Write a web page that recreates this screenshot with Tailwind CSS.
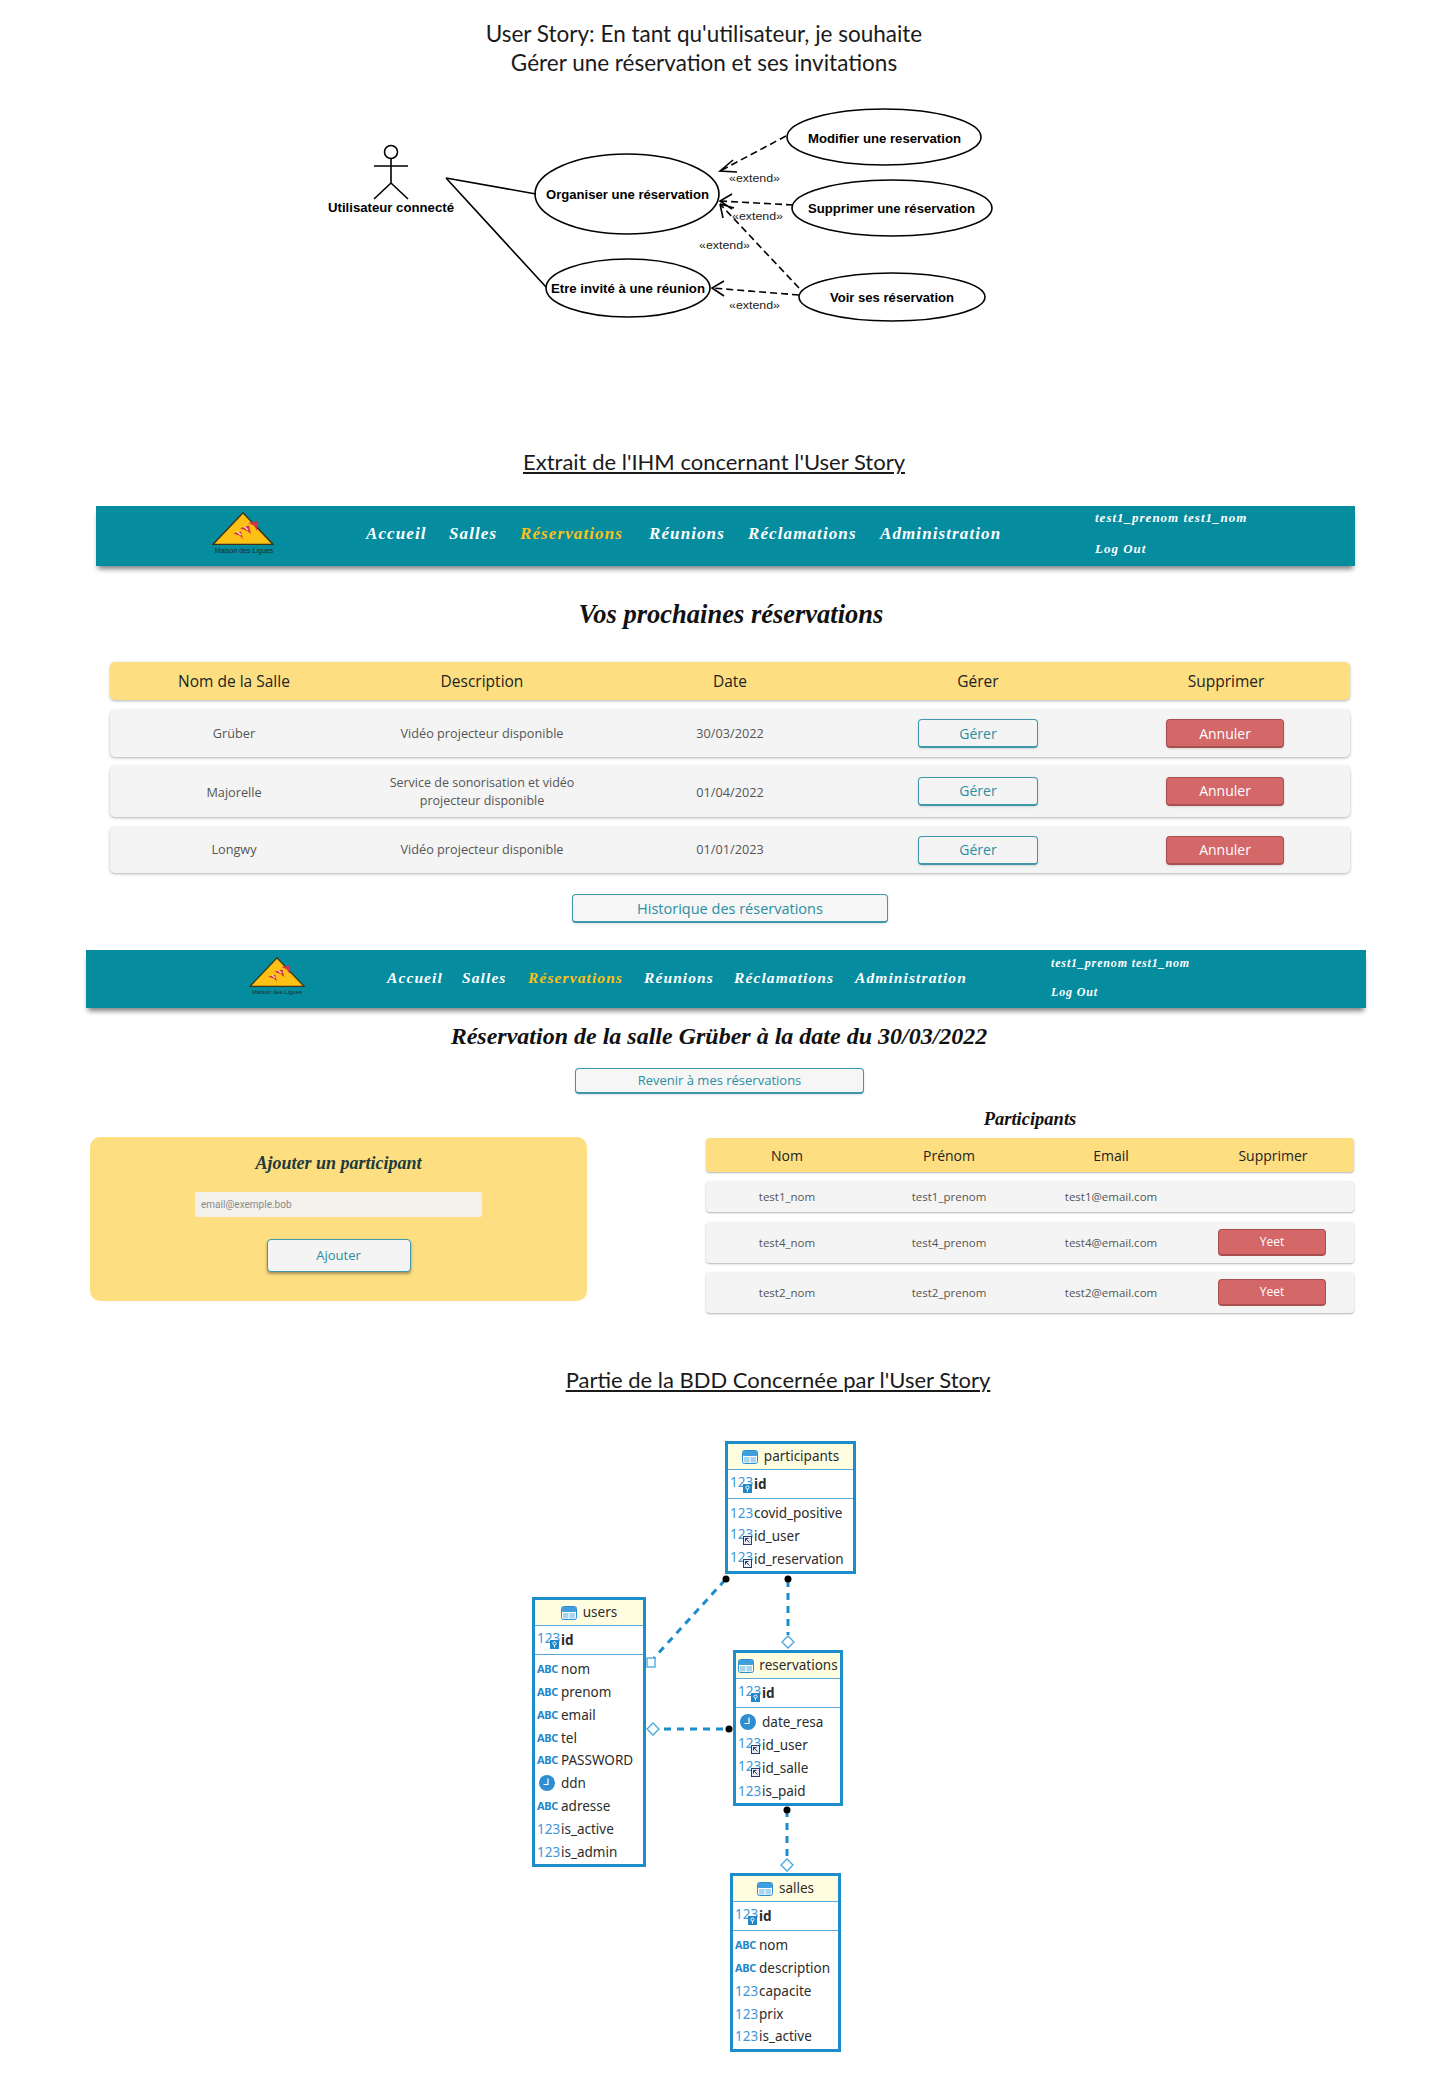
<!DOCTYPE html>
<html lang="fr">
<head>
    <meta charset="UTF-8">
    <title>User Story - Gérer une réservation</title>
    <script src="https://cdn.jsdelivr.net/npm/@tailwindcss/browser@4"></script>
</head>
<body class="bg-white">
<svg class="hidden">
    <symbol id="tbl" viewBox="0 0 16 14">
        <rect x="0.5" y="0.5" width="15" height="13" rx="2" fill="#fff" stroke="#2a8fd0"/>
        <rect x="1" y="1" width="14" height="5" rx="1" fill="#3f9fdc"/>
        <rect x="2" y="7" width="5.5" height="5.5" fill="#a9d4f0"/>
        <rect x="8.5" y="7" width="5.5" height="5.5" fill="#a9d4f0"/>
    </symbol>
    <symbol id="clock" viewBox="0 0 16 16">
        <circle cx="8" cy="8" r="8" fill="#2f8ed0"/>
        <path d="M9 3.5V9.5H4.5" fill="none" stroke="#fff" stroke-width="1.2"/>
    </symbol>
    <symbol id="key" viewBox="0 0 9 9">
        <rect width="9" height="9" fill="#1f86c9"/>
        <circle cx="4.5" cy="3.5" r="1.6" fill="none" stroke="#fff"/>
        <path d="M4.5 5V7.5" stroke="#fff"/>
    </symbol>
    <symbol id="fk" viewBox="0 0 9 9">
        <rect width="9" height="9" fill="#2c3a66"/>
        <rect x="1" y="1" width="7" height="7" fill="#e8eef8"/>
        <path d="M2.5 2.5L6.5 6.5M2.5 2.5H5.5M2.5 2.5V5.5" stroke="#2c3a66" fill="none"/>
    </symbol>
    <symbol id="logo" viewBox="0 0 62 40" preserveAspectRatio="none">
        <path d="M31 1L61 38H1Z" fill="#fdc116" stroke="#3a3418" stroke-width="1.5"/>
        <path d="M21 25l8-2 2 9-3-4zM28 19l9-3 2 10-4-4zM36 13l9-2 0 11-3-6z" fill="#d8304a"/>
        <path d="M25 23l4 4M32 17l4 4" stroke="#f4e4c0" stroke-width="1.5"/>
    </symbol>
</svg>

<div class="relative w-[1450px] h-[2100px] overflow-hidden">

    <!-- User story -->
    <div class="pt-[19px] h-[78px] text-center text-[22.5px] leading-[29px] text-[#1a1a1a] font-['Lato',sans-serif] pr-[42px]">
        <p>User Story: En tant qu'utilisateur, je souhaite</p>
        <p>Gérer une réservation et ses invitations</p>
    </div>

    <svg class="block w-[1450px] h-[369px]" viewBox="0 78 1450 369" font-family="'Liberation Sans',sans-serif">
        <g fill="none" stroke="#000" stroke-width="1.6">
            <circle cx="391" cy="152" r="6.5"/>
            <path d="M391 159V183M374 166H408M391 183L374 199M391 183L408 199"/>
            <path d="M446 178L536 194M446 178L546 287"/>
            <ellipse cx="627" cy="194" rx="92" ry="40"/>
            <ellipse cx="628" cy="288" rx="82" ry="29"/>
            <ellipse cx="884" cy="137" rx="97" ry="28"/>
            <ellipse cx="892" cy="208" rx="100" ry="28"/>
            <ellipse cx="892" cy="297" rx="93" ry="24"/>
            <g stroke-dasharray="7 4">
                <path d="M786 136L720 171"/>
                <path d="M793 205L720 201"/>
                <path d="M799 288L720 204"/>
                <path d="M799 295L712 288"/>
            </g>
            <path d="M733 160L720 171L737 172M732 194L720 201L732 209M720 204L723 218M720 204L734 208M724 281L712 288L724 296"/>
        </g>
        <g font-size="12" font-weight="700" fill="#000">
            <text x="328" y="212" textLength="126" lengthAdjust="spacingAndGlyphs">Utilisateur connecté</text>
            <text x="546" y="199" textLength="163" lengthAdjust="spacingAndGlyphs">Organiser une réservation</text>
            <text x="551" y="293" textLength="154" lengthAdjust="spacingAndGlyphs">Etre invité à une réunion</text>
            <text x="808" y="143" textLength="153" lengthAdjust="spacingAndGlyphs">Modifier une reservation</text>
            <text x="808" y="213" textLength="167" lengthAdjust="spacingAndGlyphs">Supprimer une réservation</text>
            <text x="830" y="302" textLength="124" lengthAdjust="spacingAndGlyphs">Voir ses réservation</text>
        </g>
        <g font-size="11" fill="#222">
            <text x="729" y="182" textLength="51" lengthAdjust="spacingAndGlyphs">«extend»</text>
            <text x="732" y="220" textLength="51" lengthAdjust="spacingAndGlyphs">«extend»</text>
            <text x="699" y="249" textLength="51" lengthAdjust="spacingAndGlyphs">«extend»</text>
            <text x="729" y="309" textLength="51" lengthAdjust="spacingAndGlyphs">«extend»</text>
        </g>
    </svg>

    <h2 class="h-[30px] leading-[30px] text-center text-[22px] underline pr-[22px] text-[#1a1a1a] font-['Lato',sans-serif]">Extrait de l'IHM concernant l'User Story</h2>

    <!-- Nav reservations -->
    <nav class="relative flex items-center mt-[29px] ml-[96px] w-[1259px] h-[60px] bg-[#068c9f] shadow-[0_5px_5px_-2px_rgba(0,0,0,0.5)] font-['Liberation_Serif',serif] italic font-bold text-white">
        <div class="absolute left-[116px] top-[6px] w-[64px]">
            <svg class="block w-[62px] h-[34px]"><use href="#logo"/></svg>
            <p class="text-[7px] leading-[9px] text-center not-italic font-normal text-[#1c2a2a] font-['Liberation_Sans',sans-serif]">Maison des Ligues</p>
        </div>
        <div class="flex items-center ml-[270px] -mt-[4px] text-[17px] tracking-[1.1px] whitespace-nowrap">
            <a class="w-[83px]">Accueil</a>
            <a class="w-[71px]">Salles</a>
            <a class="w-[129px] text-[#fdc116]">Réservations</a>
            <a class="w-[99px]">Réunions</a>
            <a class="w-[132px]">Réclamations</a>
            <a>Administration</a>
        </div>
        <div class="absolute left-[999px] top-[4px] text-[13px] leading-[16px] tracking-[1px]">
            <p>test1_prenom test1_nom</p>
            <p class="mt-[15px]">Log Out</p>
        </div>
    </nav>

    <h1 class="mt-[30px] h-[36px] leading-[36px] text-center text-[26.5px] pl-[12px] font-bold italic text-[#111] font-['Liberation_Serif',serif]">Vos prochaines réservations</h1>

    <!-- Table reservations -->
    <div class="mt-[30px] ml-[110px] w-[1240px] font-['Open_Sans',sans-serif]">
        <div class="grid grid-cols-5 items-center text-center h-[38px] pt-[2px] bg-[#fddf82] rounded-[5px] shadow-[0_1px_3px_rgba(0,0,0,0.3)] text-[15.5px] text-[#222]">
            <div>Nom de la Salle</div><div>Description</div><div>Date</div><div>Gérer</div><div>Supprimer</div>
        </div>
        <div class="grid grid-cols-5 items-center text-center h-[47px] mt-[10px] bg-[#f4f4f4] rounded-[5px] shadow-[0_1px_3px_rgba(0,0,0,0.3)] text-[12.7px] text-[#555]">
            <div>Grüber</div><div>Vidéo projecteur disponible</div><div>30/03/2022</div>
            <div class="flex justify-center"><button class="w-[120px] h-[29px] rounded-[4px] border border-b-[2px] border-[#3e97aa] bg-[#f4f4f4] text-[14px] text-[#2a8ea3] shadow-sm">Gérer</button></div>
            <div class="flex justify-center pr-[2px]"><button class="w-[118px] h-[29px] rounded-[4px] border border-b-[2px] border-[#a94f4f] bg-[#d46767] text-[14px] text-white shadow-sm">Annuler</button></div>
        </div>
        <div class="grid grid-cols-5 items-center text-center h-[51px] mt-[9px] bg-[#f4f4f4] rounded-[5px] shadow-[0_1px_3px_rgba(0,0,0,0.3)] text-[12.7px] leading-[18px] text-[#555]">
            <div>Majorelle</div><div class="text-[12.5px] whitespace-nowrap">Service de sonorisation et vidéo<br>projecteur disponible</div><div>01/04/2022</div>
            <div class="flex justify-center"><button class="w-[120px] h-[29px] rounded-[4px] border border-b-[2px] border-[#3e97aa] bg-[#f4f4f4] text-[14px] text-[#2a8ea3] shadow-sm">Gérer</button></div>
            <div class="flex justify-center pr-[2px]"><button class="w-[118px] h-[29px] rounded-[4px] border border-b-[2px] border-[#a94f4f] bg-[#d46767] text-[14px] text-white shadow-sm">Annuler</button></div>
        </div>
        <div class="grid grid-cols-5 items-center text-center h-[46px] mt-[10px] bg-[#f4f4f4] rounded-[5px] shadow-[0_1px_3px_rgba(0,0,0,0.3)] text-[12.7px] text-[#555]">
            <div>Longwy</div><div>Vidéo projecteur disponible</div><div>01/01/2023</div>
            <div class="flex justify-center"><button class="w-[120px] h-[29px] rounded-[4px] border border-b-[2px] border-[#3e97aa] bg-[#f4f4f4] text-[14px] text-[#2a8ea3] shadow-sm">Gérer</button></div>
            <div class="flex justify-center pr-[2px]"><button class="w-[118px] h-[29px] rounded-[4px] border border-b-[2px] border-[#a94f4f] bg-[#d46767] text-[14px] text-white shadow-sm">Annuler</button></div>
        </div>
    </div>
    <button class="block mt-[21px] ml-[572px] w-[316px] h-[29px] pt-[1px] rounded-[4px] border border-b-[2px] border-[#3e97aa] bg-[#f6f6f6] text-[14.5px] text-[#2a8ea3] shadow-sm font-['Open_Sans',sans-serif]">Historique des réservations</button>

    <!-- Nav participants -->
    <nav class="relative flex items-center mt-[27px] ml-[86px] w-[1280px] h-[58px] bg-[#068c9f] shadow-[0_5px_5px_-2px_rgba(0,0,0,0.5)] font-['Liberation_Serif',serif] italic font-bold text-white">
        <div class="absolute left-[163px] top-[7px] w-[56px]">
            <svg class="block w-[56px] h-[31px]"><use href="#logo"/></svg>
            <p class="text-[6px] leading-[8px] text-center not-italic font-normal text-[#1c2a2a] font-['Liberation_Sans',sans-serif]">Maison des Ligues</p>
        </div>
        <div class="flex items-center ml-[301px] -mt-[2px] text-[15.5px] tracking-[1.1px] whitespace-nowrap">
            <a class="w-[75px]">Accueil</a>
            <a class="w-[66px]">Salles</a>
            <a class="w-[116px] text-[#fdc116]">Réservations</a>
            <a class="w-[90px]">Réunions</a>
            <a class="w-[121px]">Réclamations</a>
            <a>Administration</a>
        </div>
        <div class="absolute left-[965px] top-[5px] text-[12px] leading-[16px] tracking-[0.85px]">
            <p>test1_prenom test1_nom</p>
            <p class="mt-[13px]">Log Out</p>
        </div>
    </nav>

    <h1 class="mt-[10px] h-[36px] leading-[36px] text-center text-[24px] pr-[12px] font-bold italic text-[#111] font-['Liberation_Serif',serif]">Réservation de la salle Grüber à la date du 30/03/2022</h1>
    <button class="block mt-[14px] ml-[575px] w-[289px] h-[26px] pt-[1px] rounded-[4px] border border-b-[2px] border-[#3e97aa] bg-[#f6f6f6] text-[13px] text-[#2a8ea3] shadow-sm font-['Open_Sans',sans-serif]">Revenir à mes réservations</button>

    <div class="flex items-start gap-[119px] pl-[90px] h-[219px]">
        <!-- Ajouter -->
        <div class="flex flex-col items-center mt-[43px] w-[497px] h-[164px] bg-[#fddf82] rounded-[10px]">
            <h3 class="mt-[14px] h-[24px] leading-[24px] text-[18px] font-bold italic text-[#1d3a3c] font-['Liberation_Serif',serif]">Ajouter un participant</h3>
            <div class="mt-[17px] w-[287px] h-[25px] pl-[6px] leading-[25px] bg-[#f4f1ec] rounded-[2px] text-[10px] text-[#8a8a8a] font-['Roboto',sans-serif]">email@exemple.bob</div>
            <button class="mt-[22px] w-[144px] h-[33px] pt-[1px] rounded-[4px] border border-[#3e97aa] bg-[#f4f4f4] text-[13px] text-[#2a8ea3] shadow-[0_2px_3px_rgba(0,0,0,0.35)] font-['Open_Sans',sans-serif]">Ajouter</button>
        </div>
        <!-- Participants -->
        <div class="w-[648px] font-['Open_Sans',sans-serif]">
            <h3 class="mt-[13px] h-[24px] leading-[24px] text-center text-[18.5px] font-bold italic text-[#111] font-['Liberation_Serif',serif]">Participants</h3>
            <div class="grid grid-cols-4 items-center text-center mt-[7px] h-[34px] bg-[#fddf82] rounded-[4px] shadow-[0_1px_2px_rgba(0,0,0,0.3)] text-[14px] text-[#222]">
                <div>Nom</div><div>Prénom</div><div>Email</div><div>Supprimer</div>
            </div>
            <div class="grid grid-cols-4 items-center text-center mt-[9px] h-[31px] bg-[#f4f4f4] rounded-[4px] shadow-[0_1px_2px_rgba(0,0,0,0.3)] text-[11.5px] text-[#555]">
                <div>test1_nom</div><div>test1_prenom</div><div>test1@email.com</div><div></div>
            </div>
            <div class="grid grid-cols-4 items-center text-center mt-[10px] h-[41px] bg-[#f4f4f4] rounded-[4px] shadow-[0_1px_2px_rgba(0,0,0,0.3)] text-[11.5px] text-[#555]">
                <div>test4_nom</div><div>test4_prenom</div><div>test4@email.com</div>
                <div class="flex justify-center pr-[2px]"><button class="w-[108px] h-[27px] rounded-[4px] border border-b-[2px] border-[#a94f4f] bg-[#d46767] text-[12px] text-white">Yeet</button></div>
            </div>
            <div class="grid grid-cols-4 items-center text-center mt-[9px] h-[41px] bg-[#f4f4f4] rounded-[4px] shadow-[0_1px_2px_rgba(0,0,0,0.3)] text-[11.5px] text-[#555]">
                <div>test2_nom</div><div>test2_prenom</div><div>test2@email.com</div>
                <div class="flex justify-center pr-[2px]"><button class="w-[108px] h-[27px] rounded-[4px] border border-b-[2px] border-[#a94f4f] bg-[#d46767] text-[12px] text-white">Yeet</button></div>
            </div>
        </div>
    </div>

    <h2 class="mt-[52px] h-[30px] leading-[30px] text-center text-[22px] underline pl-[106px] text-[#1a1a1a] font-['Lato',sans-serif]">Partie de la BDD Concernée par l'User Story</h2>

    <!-- Schema BDD -->
    <div class="relative h-[705px] font-['Noto_Sans',sans-serif] text-[13.5px] text-[#2b2b2b]">
        <svg class="absolute left-0 top-0 w-[1450px] h-[705px]" viewBox="0 1395 1450 705">
            <g fill="none" stroke="#1c8dcb" stroke-width="3" stroke-dasharray="7 6">
                <path d="M725 1580L654 1658"/>
                <path d="M788 1580V1635"/>
                <path d="M664 1729H730"/>
                <path d="M787 1810V1858"/>
            </g>
            <g fill="#000">
                <circle cx="726" cy="1579" r="3.5"/>
                <circle cx="788" cy="1579" r="3.5"/>
                <circle cx="729" cy="1729" r="3.5"/>
                <circle cx="787" cy="1810" r="3.5"/>
            </g>
            <g fill="#fff" stroke="#45a5de" stroke-width="1.3">
                <rect x="647" y="1658" width="8" height="9"/>
                <path d="M788 1636l6 6-6 6-6-6z"/>
                <path d="M653 1723l6 6-6 6-6-6z"/>
                <path d="M787 1859l6 6-6 6-6-6z"/>
            </g>
        </svg>

        <!-- participants -->
        <div class="absolute left-[725px] top-[46px] w-[131px] h-[133px] border-[3px] border-[#1c8dcb] bg-white">
            <div class="flex items-center justify-center gap-[6px] h-[26px] bg-[#fffde0] border-b border-[#5aa9da]"><svg class="w-[16px] h-[14px]"><use href="#tbl"/></svg>participants</div>
            <div class="flex items-center h-[29px] pl-[2px] border-b border-[#5aa9da] font-bold"><span class="relative -top-[2px] w-[24px] font-normal text-[13.5px] text-[#3f97d9]">123<svg class="absolute left-[13px] top-[12px] w-[9px] h-[9px]"><use href="#key"/></svg></span>id</div>
            <div class="pt-[3px]">
                <div class="flex items-center h-[23px] pl-[2px]"><span class="w-[24px] text-[13.5px] text-[#3f97d9]">123</span>covid_positive</div>
                <div class="flex items-center h-[23px] pl-[2px]"><span class="relative -top-[2px] w-[24px] text-[13.5px] text-[#3f97d9]">123<svg class="absolute left-[13px] top-[12px] w-[9px] h-[9px]"><use href="#fk"/></svg></span>id_user</div>
                <div class="flex items-center h-[23px] pl-[2px]"><span class="relative -top-[2px] w-[24px] text-[13.5px] text-[#3f97d9]">123<svg class="absolute left-[13px] top-[12px] w-[9px] h-[9px]"><use href="#fk"/></svg></span>id_reservation</div>
            </div>
        </div>

        <!-- users -->
        <div class="absolute left-[532px] top-[202px] w-[114px] h-[270px] border-[3px] border-[#1c8dcb] bg-white">
            <div class="flex items-center justify-center gap-[6px] h-[26px] bg-[#fffde0] border-b border-[#5aa9da]"><svg class="w-[16px] h-[14px]"><use href="#tbl"/></svg>users</div>
            <div class="flex items-center h-[29px] pl-[2px] border-b border-[#5aa9da] font-bold"><span class="relative -top-[2px] w-[24px] font-normal text-[13.5px] text-[#3f97d9]">123<svg class="absolute left-[13px] top-[12px] w-[9px] h-[9px]"><use href="#key"/></svg></span>id</div>
            <div class="pt-[3px]">
                <div class="flex items-center h-[22.8px] pl-[2px]"><span class="w-[24px] text-[11px] font-bold tracking-[-0.3px] text-[#1f86c9]">ABC</span>nom</div>
                <div class="flex items-center h-[22.8px] pl-[2px]"><span class="w-[24px] text-[11px] font-bold tracking-[-0.3px] text-[#1f86c9]">ABC</span>prenom</div>
                <div class="flex items-center h-[22.8px] pl-[2px]"><span class="w-[24px] text-[11px] font-bold tracking-[-0.3px] text-[#1f86c9]">ABC</span>email</div>
                <div class="flex items-center h-[22.8px] pl-[2px]"><span class="w-[24px] text-[11px] font-bold tracking-[-0.3px] text-[#1f86c9]">ABC</span>tel</div>
                <div class="flex items-center h-[22.8px] pl-[2px]"><span class="w-[24px] text-[11px] font-bold tracking-[-0.3px] text-[#1f86c9]">ABC</span>PASSWORD</div>
                <div class="flex items-center h-[22.8px] pl-[2px]"><span class="w-[24px] pl-[2px]"><svg class="w-[16px] h-[16px]"><use href="#clock"/></svg></span>ddn</div>
                <div class="flex items-center h-[22.8px] pl-[2px]"><span class="w-[24px] text-[11px] font-bold tracking-[-0.3px] text-[#1f86c9]">ABC</span>adresse</div>
                <div class="flex items-center h-[22.8px] pl-[2px]"><span class="w-[24px] text-[13.5px] text-[#3f97d9]">123</span>is_active</div>
                <div class="flex items-center h-[22.8px] pl-[2px]"><span class="w-[24px] text-[13.5px] text-[#3f97d9]">123</span>is_admin</div>
            </div>
        </div>

        <!-- reservations -->
        <div class="absolute left-[733px] top-[255px] w-[110px] h-[156px] border-[3px] border-[#1c8dcb] bg-white">
            <div class="flex items-center justify-center gap-[5px] h-[26px] bg-[#fffde0] border-b border-[#5aa9da]"><svg class="w-[16px] h-[14px]"><use href="#tbl"/></svg>reservations</div>
            <div class="flex items-center h-[29px] pl-[2px] border-b border-[#5aa9da] font-bold"><span class="relative -top-[2px] w-[24px] font-normal text-[13.5px] text-[#3f97d9]">123<svg class="absolute left-[13px] top-[12px] w-[9px] h-[9px]"><use href="#key"/></svg></span>id</div>
            <div class="pt-[3px]">
                <div class="flex items-center h-[22.8px] pl-[2px]"><span class="w-[24px] pl-[2px]"><svg class="w-[16px] h-[16px]"><use href="#clock"/></svg></span>date_resa</div>
                <div class="flex items-center h-[22.8px] pl-[2px]"><span class="relative -top-[2px] w-[24px] text-[13.5px] text-[#3f97d9]">123<svg class="absolute left-[13px] top-[12px] w-[9px] h-[9px]"><use href="#fk"/></svg></span>id_user</div>
                <div class="flex items-center h-[22.8px] pl-[2px]"><span class="relative -top-[2px] w-[24px] text-[13.5px] text-[#3f97d9]">123<svg class="absolute left-[13px] top-[12px] w-[9px] h-[9px]"><use href="#fk"/></svg></span>id_salle</div>
                <div class="flex items-center h-[22.8px] pl-[2px]"><span class="w-[24px] text-[13.5px] text-[#3f97d9]">123</span>is_paid</div>
            </div>
        </div>

        <!-- salles -->
        <div class="absolute left-[730px] top-[478px] w-[111px] h-[179px] border-[3px] border-[#1c8dcb] bg-white">
            <div class="flex items-center justify-center gap-[6px] h-[26px] bg-[#fffde0] border-b border-[#5aa9da]"><svg class="w-[16px] h-[14px]"><use href="#tbl"/></svg>salles</div>
            <div class="flex items-center h-[29px] pl-[2px] border-b border-[#5aa9da] font-bold"><span class="relative -top-[2px] w-[24px] font-normal text-[13.5px] text-[#3f97d9]">123<svg class="absolute left-[13px] top-[12px] w-[9px] h-[9px]"><use href="#key"/></svg></span>id</div>
            <div class="pt-[3px]">
                <div class="flex items-center h-[22.8px] pl-[2px]"><span class="w-[24px] text-[11px] font-bold tracking-[-0.3px] text-[#1f86c9]">ABC</span>nom</div>
                <div class="flex items-center h-[22.8px] pl-[2px]"><span class="w-[24px] text-[11px] font-bold tracking-[-0.3px] text-[#1f86c9]">ABC</span>description</div>
                <div class="flex items-center h-[22.8px] pl-[2px]"><span class="w-[24px] text-[13.5px] text-[#3f97d9]">123</span>capacite</div>
                <div class="flex items-center h-[22.8px] pl-[2px]"><span class="w-[24px] text-[13.5px] text-[#3f97d9]">123</span>prix</div>
                <div class="flex items-center h-[22.8px] pl-[2px]"><span class="w-[24px] text-[13.5px] text-[#3f97d9]">123</span>is_active</div>
            </div>
        </div>
    </div>
</div>
</body>
</html>
